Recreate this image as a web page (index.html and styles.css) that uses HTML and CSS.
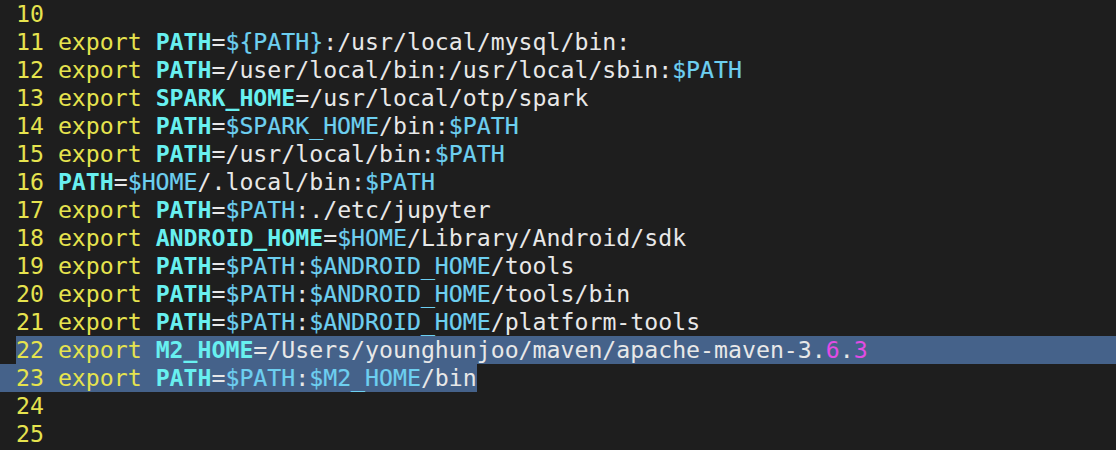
FILE: index.html
```html
<!DOCTYPE html>
<html lang="en">
<head>
  <meta charset="UTF-8">
  <title>.bash_profile</title>
  <link rel="stylesheet" href="styles.css">
</head>
<body>

<div class="editor">
  <div class="line"><span class="num">10</span></div>
  <div class="line"><span class="num">11</span> <span class="kw">export</span> <span class="var">PATH</span>=<span class="ref">${PATH}</span>:/usr/local/mysql/bin:</div>
  <div class="line"><span class="num">12</span> <span class="kw">export</span> <span class="var">PATH</span>=/user/local/bin:/usr/local/sbin:<span class="ref">$PATH</span></div>
  <div class="line"><span class="num">13</span> <span class="kw">export</span> <span class="var">SPARK_HOME</span>=/usr/local/otp/spark</div>
  <div class="line"><span class="num">14</span> <span class="kw">export</span> <span class="var">PATH</span>=<span class="ref">$SPARK_HOME</span>/bin:<span class="ref">$PATH</span></div>
  <div class="line"><span class="num">15</span> <span class="kw">export</span> <span class="var">PATH</span>=/usr/local/bin:<span class="ref">$PATH</span></div>
  <div class="line"><span class="num">16</span> <span class="var">PATH</span>=<span class="ref">$HOME</span>/.local/bin:<span class="ref">$PATH</span></div>
  <div class="line"><span class="num">17</span> <span class="kw">export</span> <span class="var">PATH</span>=<span class="ref">$PATH</span>:./etc/jupyter</div>
  <div class="line"><span class="num">18</span> <span class="kw">export</span> <span class="var">ANDROID_HOME</span>=<span class="ref">$HOME</span>/Library/Android/sdk</div>
  <div class="line"><span class="num">19</span> <span class="kw">export</span> <span class="var">PATH</span>=<span class="ref">$PATH</span>:<span class="ref">$ANDROID_HOME</span>/tools</div>
  <div class="line"><span class="num">20</span> <span class="kw">export</span> <span class="var">PATH</span>=<span class="ref">$PATH</span>:<span class="ref">$ANDROID_HOME</span>/tools/bin</div>
  <div class="line"><span class="num">21</span> <span class="kw">export</span> <span class="var">PATH</span>=<span class="ref">$PATH</span>:<span class="ref">$ANDROID_HOME</span>/platform-tools</div>
  <div class="line selected"><span class="num">22</span> <span class="kw">export</span> <span class="var">M2_HOME</span>=/Users/younghunjoo/maven/apache-maven-3.<span class="num-lit">6</span>.<span class="num-lit">3</span></div>
  <div class="line"><span class="sel-end"><span class="num">23</span> <span class="kw">export</span> <span class="var">PATH</span>=<span class="ref">$PATH</span>:<span class="ref">$M2_HOME</span>/bin</span></div>
  <div class="line"><span class="num">24</span></div>
  <div class="line"><span class="num">25</span></div>
</div>

</body>
</html>
```

FILE: styles.css
```css
* {
  box-sizing: border-box;
}

body {
  margin: 0;
  background: #1e1e1e;
  color: #e8e8e8;
  font-family: 'DejaVu Sans Mono', 'Liberation Mono', monospace;
  font-size: 23.2px;
  overflow: hidden;
}

.editor {
  padding-left: 16px;
}

.line {
  height: 28px;
  line-height: 28px;
  white-space: pre;
}

.num,
.kw {
  color: #e6e34e;
}

.var {
  color: #68f0f0;
  font-weight: bold;
}

.ref {
  color: #6dcff0;
  -webkit-text-stroke: 0.2px #6dcff0;
}

.num-lit {
  color: #e24ce4;
}

/* mouse selection over lines 22-23 */
.selected {
  background: #45628a;
}

.sel-end {
  display: inline-block;
  margin-left: -16px;
  padding-left: 16px;
  background: #45628a;
}
```
